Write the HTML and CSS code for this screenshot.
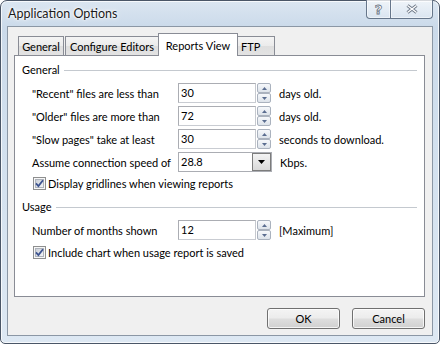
FILE: index.html
```html
<!DOCTYPE html>
<html>
<head>
<meta charset="utf-8">
<title>Application Options</title>
<link rel="stylesheet" href="styles.css">
</head>
<body>
<div class="window">
  <div class="titlebar">
    <span class="title">Application Options</span>
    <div class="caption">
      <div class="cbtn help"><span class="qmark">?</span></div>
      <div class="cbtn close">
        <svg width="12" height="10" viewBox="0 0 12 10">
          <path d="M1.5 1.5 L10.5 8.5 M10.5 1.5 L1.5 8.5" stroke="#6f7a89" stroke-width="3.2" fill="none"/>
          <path d="M1.5 1.5 L10.5 8.5 M10.5 1.5 L1.5 8.5" stroke="#ffffff" stroke-width="1.3" fill="none"/>
        </svg>
      </div>
    </div>
  </div>
  <div class="client">
    <div class="tabs">
      <div class="tab t-general">General</div>
      <div class="tab t-config">Configure Editors</div>
      <div class="tab active t-reports">Reports View</div>
      <div class="tab t-ftp">FTP</div>
    </div>
    <div class="panel">
      <div class="ghead"><span>General</span><div class="rule"></div></div>

      <div class="row first">
        <span class="lbl">"Recent" files are less than</span>
        <div class="input">30</div>
        <div class="spin">
          <span><svg width="5" height="3" viewBox="0 0 5 3"><path d="M0 3 L2.5 0 L5 3 Z" fill="#5a6d90"/></svg></span>
          <span><svg width="5" height="3" viewBox="0 0 5 3"><path d="M0 0 L5 0 L2.5 3 Z" fill="#5a6d90"/></svg></span>
        </div>
        <span class="unit">days old.</span>
      </div>

      <div class="row">
        <span class="lbl">"Older" files are more than</span>
        <div class="input">72</div>
        <div class="spin">
          <span><svg width="5" height="3" viewBox="0 0 5 3"><path d="M0 3 L2.5 0 L5 3 Z" fill="#5a6d90"/></svg></span>
          <span><svg width="5" height="3" viewBox="0 0 5 3"><path d="M0 0 L5 0 L2.5 3 Z" fill="#5a6d90"/></svg></span>
        </div>
        <span class="unit">days old.</span>
      </div>

      <div class="row">
        <span class="lbl">"Slow pages" take at least</span>
        <div class="input">30</div>
        <div class="spin">
          <span><svg width="5" height="3" viewBox="0 0 5 3"><path d="M0 3 L2.5 0 L5 3 Z" fill="#5a6d90"/></svg></span>
          <span><svg width="5" height="3" viewBox="0 0 5 3"><path d="M0 0 L5 0 L2.5 3 Z" fill="#5a6d90"/></svg></span>
        </div>
        <span class="unit">seconds to download.</span>
      </div>

      <div class="row">
        <span class="lbl">Assume connection speed of</span>
        <div class="combo">
          <span class="combo-text">28.8</span>
          <span class="combo-btn"><svg width="7" height="4" viewBox="0 0 7 4"><path d="M0 0 L7 0 L3.5 4 Z" fill="#000"/></svg></span>
        </div>
        <span class="unit">Kbps.</span>
      </div>

      <div class="check first-check">
        <svg class="cb" width="13" height="13" viewBox="0 0 13 13">
          <defs>
            <linearGradient id="cbfill" x1="0" y1="0" x2="1" y2="1">
              <stop offset="0" stop-color="#c9ced6"/>
              <stop offset="1" stop-color="#f5f6f8"/>
            </linearGradient>
          </defs>
          <rect x="0.5" y="0.5" width="12" height="12" fill="#f7f7f7" stroke="#8e8f8f"/>
          <rect x="2.5" y="2.5" width="8" height="8" fill="url(#cbfill)" stroke="#aeb3bb"/>
          <path d="M3 6.4 L5.4 9 L10 3.2" stroke="#3c5390" stroke-width="1.8" fill="none"/>
        </svg>
        <span>Display gridlines when viewing reports</span>
      </div>

      <div class="ghead usage"><span>Usage</span><div class="rule"></div></div>

      <div class="row first">
        <span class="lbl">Number of months shown</span>
        <div class="input">12</div>
        <div class="spin">
          <span><svg width="5" height="3" viewBox="0 0 5 3"><path d="M0 3 L2.5 0 L5 3 Z" fill="#5a6d90"/></svg></span>
          <span><svg width="5" height="3" viewBox="0 0 5 3"><path d="M0 0 L5 0 L2.5 3 Z" fill="#5a6d90"/></svg></span>
        </div>
        <span class="unit">[Maximum]</span>
      </div>

      <div class="check">
        <svg class="cb" width="13" height="13" viewBox="0 0 13 13">
          <rect x="0.5" y="0.5" width="12" height="12" fill="#f7f7f7" stroke="#8e8f8f"/>
          <rect x="2.5" y="2.5" width="8" height="8" fill="url(#cbfill)" stroke="#aeb3bb"/>
          <path d="M3 6.4 L5.4 9 L10 3.2" stroke="#3c5390" stroke-width="1.8" fill="none"/>
        </svg>
        <span>Include chart when usage report is saved</span>
      </div>
    </div>
    <div class="buttons">
      <button class="btn">OK</button>
      <button class="btn">Cancel</button>
    </div>
  </div>
</div>
</body>
</html>
```

FILE: styles.css
```css
* { box-sizing: border-box; }
html, body { margin: 0; padding: 0; }
body {
  background: #ffffff;
  font-family: Lato, "Liberation Sans", sans-serif;
  font-size: 11px;
  color: #000;
}
.window {
  width: 440px;
  height: 344px;
  border: 1px solid #4a5667;
  border-radius: 7px 7px 5px 5px;
  background: linear-gradient(180deg, #dbe6f1 0, #cbdaea 26px, #d2e0ee 140px, #dde8f3 100%);
  box-shadow: inset 0 0 0 1px rgba(255,255,255,0.75);
  padding: 0 6px 7px 6px;
  display: flex;
  flex-direction: column;
}
.titlebar {
  height: 25px;
  display: flex;
  justify-content: space-between;
  align-items: flex-start;
}
.title {
  font-size: 12.5px;
  line-height: 15px;
  padding: 5px 0 0 1px;
  color: #1b1b1b;
  text-shadow: 0 0 6px #fff, 0 0 3px #fff, 0 0 2px #fff;
}
.caption {
  display: flex;
  margin-top: -1px;
  height: 19px;
}
.cbtn {
  height: 19px;
  border: 1px solid #66768a;
  border-top: none;
  background: linear-gradient(180deg, rgba(255,255,255,0.55), rgba(255,255,255,0.2));
  box-shadow: inset 0 0 0 1px rgba(255,255,255,0.5);
  display: flex;
  align-items: center;
  justify-content: center;
}
.help { width: 25px; border-radius: 0 0 0 4px; }
.close { width: 43px; margin-left: -1px; border-radius: 0 0 4px 0; }
.qmark {
  font-family: "DejaVu Sans", sans-serif;
  font-size: 13px;
  font-weight: bold;
  line-height: 13px;
  color: #ffffff;
  -webkit-text-stroke: 0.8px #6a7484;
}
.client {
  flex: 1;
  background: #f0f0f0;
  border: 1px solid #8b97a5;
  padding: 6px 7px 6px 6px;
  display: flex;
  flex-direction: column;
}
.tabs {
  display: flex;
  align-items: flex-end;
  height: 22px;
  padding-left: 4px;
  position: relative;
  z-index: 1;
}
.tab {
  height: 19px;
  border: 1px solid #898c95;
  border-bottom: none;
  background: linear-gradient(180deg, #f4f4f4 0, #ebebeb 50%, #dedede 51%, #e3e3e3 100%);
  padding-top: 2px;
  line-height: 15px;
  white-space: nowrap;
  text-align: center;
}
.t-general { width: 46px; }
.t-config { width: 94px; margin-left: 1px; }
.t-reports { width: 80px; margin-left: -1px; }
.t-ftp { width: 38px; margin-left: -1px; text-align: left; padding-left: 3px; }
.tab.active {
  height: 23px;
  margin-bottom: -1px;
  background: #ffffff;
  padding-top: 4px;
}
.panel {
  height: 242px;
  background: #ffffff;
  border: 1px solid #898c95;
  padding: 7px 7px 0 7px;
}
.ghead {
  display: flex;
  align-items: center;
  gap: 4px;
  height: 14px;
  line-height: 14px;
}
.ghead .rule {
  flex: 1;
  height: 1px;
  background: #c4c9cf;
}
.ghead.usage { margin-top: 10px; }
.row {
  display: flex;
  align-items: center;
  height: 20px;
  margin-top: 3px;
  padding-left: 10px;
}
.row.first { margin-top: 6px; }
.lbl { width: 146px; white-space: nowrap; }
.input {
  width: 78px;
  height: 20px;
  border: 1px solid #abadb3;
  border-right-color: #c6c9cf;
  border-bottom-color: #c9ccd2;
  background: #fff;
  padding-left: 2px;
  line-height: 18px;
}
.spin {
  width: 14px;
  height: 20px;
  margin-left: 1px;
  display: flex;
  flex-direction: column;
}
.spin span {
  flex: 1;
  border: 1px solid #aab2be;
  border-radius: 2px;
  background: linear-gradient(180deg, #f6f8fb, #dde3ea);
  display: flex;
  align-items: center;
  justify-content: center;
}
.spin svg { display: block; }
.unit { margin-left: 8px; white-space: nowrap; }
.combo {
  width: 94px;
  height: 20px;
  border: 1px solid #abadb3;
  background: #fff;
  display: flex;
}
.combo-text {
  flex: 1;
  padding-left: 2px;
  line-height: 18px;
}
.combo-btn {
  width: 19px;
  height: 18px;
  border: 1px solid #7c7c7c;
  background: linear-gradient(180deg, #f3f3f3, #d9d9d9);
  display: flex;
  align-items: center;
  justify-content: center;
}
.combo-btn svg { display: block; }
.check {
  display: flex;
  align-items: center;
  gap: 2px;
  height: 13px;
  margin-top: 6px;
  padding-left: 11px;
  white-space: nowrap;
}
.check.first-check { margin-top: 5px; }
.cb { display: block; flex: none; }
.buttons {
  display: flex;
  justify-content: flex-end;
  gap: 12px;
  margin-top: 11px;
}
.btn {
  width: 73px;
  height: 21px;
  padding: 0;
  border: 1px solid #707070;
  border-radius: 3px;
  background: linear-gradient(180deg, #f4f4f4 0, #ececec 48%, #dedede 52%, #d0d0d0 100%);
  box-shadow: inset 0 0 0 1px rgba(255,255,255,0.75);
  font-family: Lato, "Liberation Sans", sans-serif;
  font-size: 11px;
  color: #000;
  line-height: 19px;
}
```
